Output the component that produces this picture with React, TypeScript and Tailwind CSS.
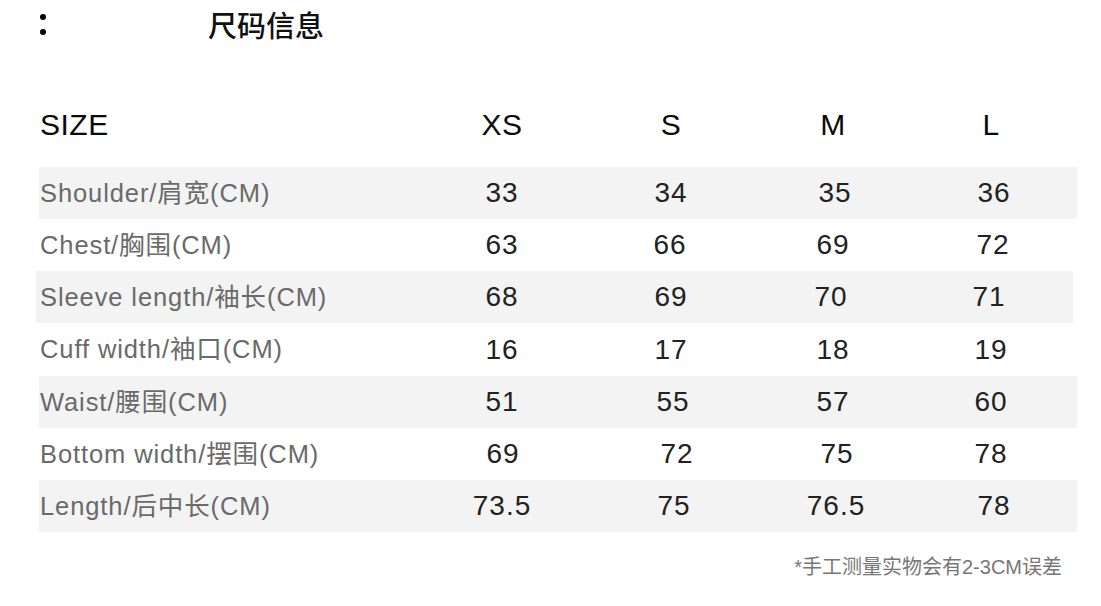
const sizes = ['XS', 'S', 'M', 'L'];

// small per-cell nudges so the numbers sit where the photographed table has them
const rows = [
  { label: 'Shoulder/肩宽(CM)', values: ['33', '34', '35', '36'], nudge: ['', '', 'translate-x-[2px]', 'translate-x-[3px]'], shaded: true },
  { label: 'Chest/胸围(CM)', values: ['63', '66', '69', '72'], nudge: ['', '-translate-x-[1px]', '', 'translate-x-[2px]'] },
  { label: 'Sleeve length/袖长(CM)', values: ['68', '69', '70', '71'], nudge: ['', '', '-translate-x-[2px]', '-translate-x-[2px]'], shaded: true, shifted: true },
  { label: 'Cuff width/袖口(CM)', values: ['16', '17', '18', '19'], nudge: ['', '', '', ''], tall: true },
  { label: 'Waist/腰围(CM)', values: ['51', '55', '57', '60'], nudge: ['', 'translate-x-[2px]', '', ''], shaded: true },
  { label: 'Bottom width/摆围(CM)', values: ['69', '72', '75', '78'], nudge: ['translate-x-[1px]', 'translate-x-[6px]', 'translate-x-[4px]', ''], },
  { label: 'Length/后中长(CM)', values: ['73.5', '75', '76.5', '78'], nudge: ['', 'translate-x-[3px]', 'translate-x-[3px]', 'translate-x-[3px]'], shaded: true },
];

const cols = 'grid grid-cols-[383px_160px_178px_146px_170px] items-center';

export default function App() {
  return (
    <div className="w-[1101px] h-[606px] bg-white font-['Liberation_Sans','Noto_Sans_CJK_SC',sans-serif] overflow-hidden">
      {/* Title bar */}
      <div className="flex items-center h-[48px]">
        <div className="flex flex-col gap-[9px] ml-[40px] mt-[1px]">
          <span className="block w-[6px] h-[6px] rounded-full bg-black" />
          <span className="block w-[6px] h-[6px] rounded-full bg-black" />
        </div>
        <h1 className="ml-[162px] text-[29px] leading-none font-medium text-[#111] font-['Noto_Sans_CJK_SC',sans-serif]">
          尺码信息
        </h1>
      </div>

      {/* Table */}
      <div className="ml-[39px] w-[1038px] mt-[50px]">
        <div className={`${cols} h-[52px] text-[30px] tracking-[0.5px] text-[#0a0a0a]`}>
          <span className="pl-[1px]">SIZE</span>
          {sizes.map((s) => (
            <span key={s} className="text-center">{s}</span>
          ))}
        </div>

        <div className="mt-[17px]">
          {rows.map((r) => (
            <div
              key={r.label}
              className={`${cols} ${r.tall ? 'h-[53px]' : 'h-[52px]'} ${r.shaded ? 'bg-[#f3f3f3]' : ''} ${r.shifted ? '-ml-[3px] mr-[4px] pl-[3px]' : ''}`}
            >
              <span className="pl-[1px] text-[25.5px] tracking-[0.9px] text-[#6a6a6a]">{r.label}</span>
              {r.values.map((v, i) => (
                <span key={i} className={`text-center text-[28px] tracking-[1px] text-[#222] ${r.nudge[i]}`}>{v}</span>
              ))}
            </div>
          ))}
        </div>
      </div>

      <p className="mt-[21px] pr-[39px] text-right text-[20px] leading-[28px] text-[#777]">
        *手工测量实物会有2-3CM误差
      </p>
    </div>
  );
}
